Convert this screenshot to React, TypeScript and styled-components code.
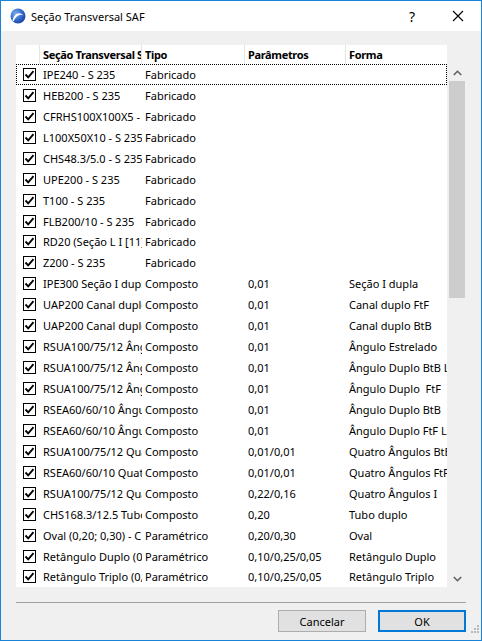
import React from "react";
import styled, { createGlobalStyle } from "styled-components";

const Global = createGlobalStyle`
  html, body { margin: 0; padding: 0; background: #fff; }
  * { box-sizing: border-box; }
  body { font-family: "Noto Sans", "Open Sans", sans-serif; }
`;

const Window = styled.div`
  width: 482px;
  height: 641px;
  border: 1px solid #1883d7;
  display: flex;
  flex-direction: column;
  background: #f0f0f0;
  position: relative;
  overflow: hidden;
`;

const TitleBar = styled.div`
  height: 30px;
  background: #fff;
  display: flex;
  align-items: center;
  padding-left: 9px;
  flex-shrink: 0;
`;

const TitleText = styled.span`
  font-size: 11px;
  color: #000;
  margin-left: 5px;
  flex: 1;
`;

const TitleButton = styled.div<{ $w: number }>`
  width: ${(p) => p.$w}px;
  height: 30px;
  display: flex;
  align-items: center;
  justify-content: center;
  font-size: 14px;
  color: #000;
`;

const Body = styled.div`
  flex: 1;
  display: flex;
  flex-direction: column;
  padding: 14px 15px 0 15px;
`;

const ListBox = styled.div`
  display: flex;
  height: 542px;
`;

const TableArea = styled.div`
  width: 433px;
  background: #fff;
  display: flex;
  flex-direction: column;
  overflow: hidden;
`;

const cols = [24, 102, 103, 101, 103];

const Row = styled.div<{ $h: number }>`
  display: grid;
  grid-template-columns: ${cols.map((c) => c + "px").join(" ")};
  height: ${(p) => p.$h}px;
  flex-shrink: 0;
  align-items: center;
  position: relative;
`;

const HeadCell = styled.div`
  height: 19px;
  border-right: 1px solid #e5e5e5;
  font-weight: bold;
  font-size: 11px;
  letter-spacing: -0.35px;
  color: #000;
  padding-left: 3px;
  display: flex;
  align-items: center;
  white-space: nowrap;
  overflow: hidden;
`;

const Cell = styled.div<{ $pre?: boolean }>`
  font-size: 11px;
  color: #000;
  padding-left: 3px;
  white-space: ${(p) => (p.$pre ? "pre" : "nowrap")};
  overflow: hidden;
`;

const CheckCell = styled.div`
  display: flex;
  align-items: center;
  padding-left: 7px;
`;

const Box = styled.div`
  width: 13px;
  height: 13px;
  border: 1px solid #000;
  background: #fff;
  display: flex;
  align-items: center;
  justify-content: center;
`;

const Focus = styled.div`
  position: absolute;
  inset: 0;
  border: 1px dotted #000;
  pointer-events: none;
`;

const ScrollCol = styled.div`
  width: 18px;
  display: flex;
  flex-direction: column;
  padding-top: 19px;
  margin-left: 1px;
`;

const ArrowBtn = styled.div`
  height: 17px;
  display: flex;
  align-items: center;
  justify-content: center;
  flex-shrink: 0;
`;

const Track = styled.div`
  flex: 1;
  padding: 0 1px;
`;

const Thumb = styled.div`
  height: 217px;
  background: #cdcdcd;
`;

const Divider = styled.div`
  height: 1px;
  background: #a0a0a0;
  margin-top: 15px;
`;

const ButtonRow = styled.div`
  display: flex;
  justify-content: flex-end;
  gap: 12px;
  margin-top: 7px;
`;

const Button = styled.div<{ $def?: boolean }>`
  width: 88px;
  height: 22px;
  background: #e1e1e1;
  border: ${(p) => (p.$def ? "2px solid #0078d7" : "1px solid #adadad")};
  display: flex;
  align-items: center;
  justify-content: center;
  font-size: 11px;
  color: #000;
`;

const Grip = styled.div`
  position: absolute;
  right: 1px;
  bottom: 1px;
`;

type R = [string, string, string, string];

const rows: R[] = [
  ["IPE240 - S 235", "Fabricado", "", ""],
  ["HEB200 - S 235", "Fabricado", "", ""],
  ["CFRHS100X100X5 - S 235", "Fabricado", "", ""],
  ["L100X50X10 - S 235", "Fabricado", "", ""],
  ["CHS48.3/5.0 - S 235", "Fabricado", "", ""],
  ["UPE200 - S 235", "Fabricado", "", ""],
  ["T100 - S 235", "Fabricado", "", ""],
  ["FLB200/10 - S 235", "Fabricado", "", ""],
  ["RD20 (Seção L I [11] - S 235)", "Fabricado", "", ""],
  ["Z200 - S 235", "Fabricado", "", ""],
  ["IPE300 Seção I dupla", "Composto", "0,01", "Seção I dupla"],
  ["UAP200 Canal duplo FtF", "Composto", "0,01", "Canal duplo FtF"],
  ["UAP200 Canal duplo BtB", "Composto", "0,01", "Canal duplo BtB"],
  ["RSUA100/75/12 Ângulo Estrelado", "Composto", "0,01", "Ângulo Estrelado"],
  ["RSUA100/75/12 Ângulo Duplo BtB L", "Composto", "0,01", "Ângulo Duplo BtB L"],
  ["RSUA100/75/12 Ângulo Duplo FtF", "Composto", "0,01", "Ângulo Duplo  FtF"],
  ["RSEA60/60/10 Ângulo Duplo BtB", "Composto", "0,01", "Ângulo Duplo BtB"],
  ["RSEA60/60/10 Ângulo Duplo FtF L", "Composto", "0,01", "Ângulo Duplo FtF L"],
  ["RSUA100/75/12 Quatro Ângulos BtB", "Composto", "0,01/0,01", "Quatro Ângulos BtB"],
  ["RSEA60/60/10 Quatro Ângulos FtF", "Composto", "0,01/0,01", "Quatro Ângulos FtF"],
  ["RSUA100/75/12 Quatro Ângulos I", "Composto", "0,22/0,16", "Quatro Ângulos I"],
  ["CHS168.3/12.5 Tubo duplo", "Composto", "0,20", "Tubo duplo"],
  ["Oval (0,20; 0,30) - C", "Paramétrico", "0,20/0,30", "Oval"],
  ["Retângulo Duplo (0,10/0,25/0,05)", "Paramétrico", "0,10/0,25/0,05", "Retângulo Duplo"],
  ["Retângulo Triplo (0,10/0,25/0,05)", "Paramétrico", "0,10/0,25/0,05", "Retângulo Triplo"],
];

const Check = () => (
  <Box>
    <svg width="11" height="11" viewBox="0 0 11 11">
      <path d="M1.5 5.5 L4.2 8.3 L9.5 2.2" fill="none" stroke="#000" strokeWidth="1.9" />
    </svg>
  </Box>
);

const AppIcon = () => (
  <svg width="16" height="16" viewBox="0 0 16 16">
    <defs>
      <radialGradient id="g" cx="0.35" cy="0.35" r="0.75">
        <stop offset="0" stopColor="#7fb0ee" />
        <stop offset="0.6" stopColor="#2f65c8" />
        <stop offset="1" stopColor="#1a3f91" />
      </radialGradient>
    </defs>
    <circle cx="8" cy="8" r="7.5" fill="url(#g)" />
    <path d="M2.5 12.5 C4 6 9 3 13.5 7.5 C10 5.5 6 7.5 3.5 13.5 Z" fill="#fff" />
  </svg>
);

export default function App() {
  return (
    <>
      <Global />
      <Window>
        <TitleBar>
          <AppIcon />
          <TitleText>Seção Transversal SAF</TitleText>
          <TitleButton $w={46}>?</TitleButton>
          <TitleButton $w={46}>
            <svg width="12" height="12" viewBox="0 0 12 12">
              <path d="M1 1 L11 11 M11 1 L1 11" stroke="#000" strokeWidth="1.1" />
            </svg>
          </TitleButton>
        </TitleBar>
        <Body>
          <ListBox>
            <TableArea>
              <Row $h={19}>
                <HeadCell />
                <HeadCell>Seção Transversal SAF</HeadCell>
                <HeadCell>Tipo</HeadCell>
                <HeadCell>Parâmetros</HeadCell>
                <HeadCell>Forma</HeadCell>
              </Row>
              {rows.map((r, i) => (
                <Row key={i} $h={20.95}>
                  <CheckCell>
                    <Check />
                  </CheckCell>
                  <Cell>{r[0]}</Cell>
                  <Cell>{r[1]}</Cell>
                  <Cell>{r[2]}</Cell>
                  <Cell $pre>{r[3]}</Cell>
                  {i === 0 && <Focus />}
                </Row>
              ))}
            </TableArea>
            <ScrollCol>
              <ArrowBtn>
                <svg width="9" height="6" viewBox="0 0 9 6">
                  <path d="M0.8 5 L4.5 1.3 L8.2 5" fill="none" stroke="#606060" strokeWidth="1.6" />
                </svg>
              </ArrowBtn>
              <Track>
                <Thumb />
              </Track>
              <ArrowBtn>
                <svg width="9" height="6" viewBox="0 0 9 6">
                  <path d="M0.8 1 L4.5 4.7 L8.2 1" fill="none" stroke="#606060" strokeWidth="1.6" />
                </svg>
              </ArrowBtn>
            </ScrollCol>
          </ListBox>
          <Divider />
          <ButtonRow>
            <Button>Cancelar</Button>
            <Button $def>OK</Button>
          </ButtonRow>
        </Body>
        <Grip>
          <svg width="10" height="10" viewBox="0 0 10 10">
            {[[8, 2], [8, 5], [8, 8], [5, 5], [5, 8], [2, 8]].map(([x, y], k) => (
              <rect key={k} x={x - 1} y={y - 1} width="2" height="2" fill="#b8b8b8" />
            ))}
          </svg>
        </Grip>
      </Window>
    </>
  );
}
